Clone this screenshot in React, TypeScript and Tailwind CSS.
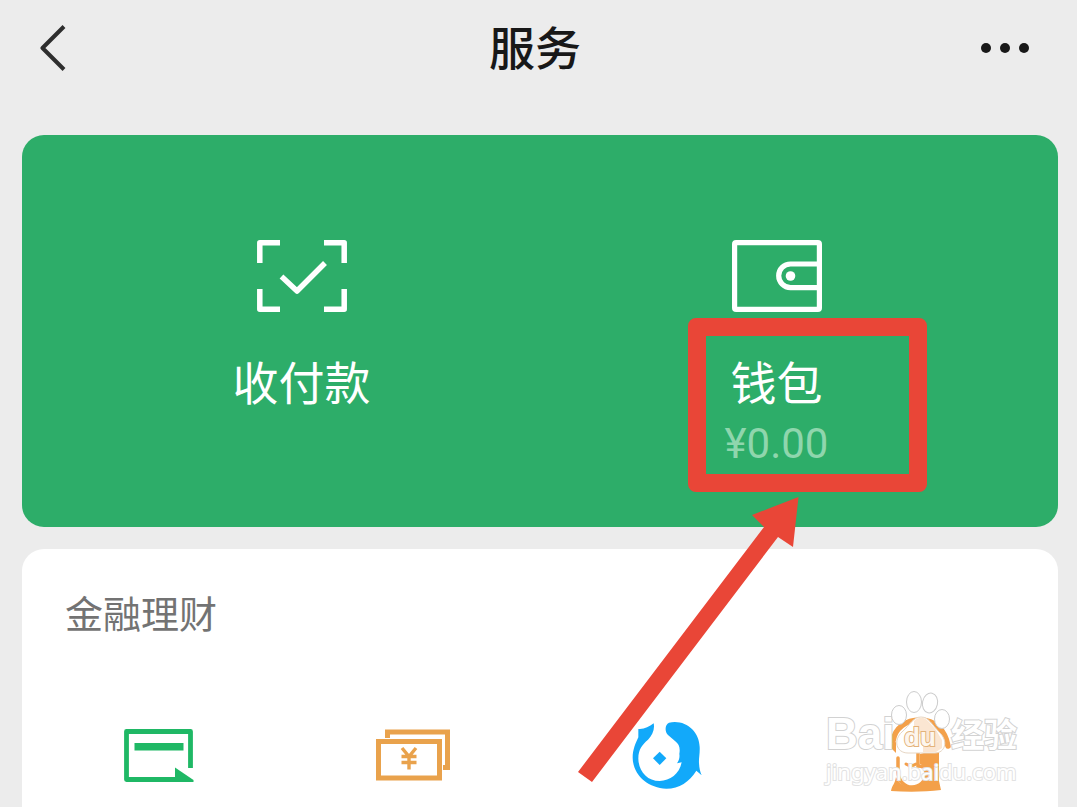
import type { ReactNode } from "react";

function ScanIcon() {
  return (
    <svg viewBox="0 0 90 72" className="h-[72px] w-[90px]" fill="none" stroke="currentColor" strokeWidth="5.5" strokeLinejoin="round">
      <path d="M23 2.8H2.8V23M67 2.8h20.2V23M2.8 49v20.2H23M67 69.2h20.2V49" />
      <path d="M24.500 36.500 40 51 68 23" />
    </svg>
  );
}

function WalletIcon() {
  return (
    <svg viewBox="0 0 90 72" className="h-[72px] w-[90px]" fill="none" stroke="currentColor" strokeWidth="5.2">
      <rect x="2.600" y="2.600" width="84.800" height="66.800" rx="1.500" />
      <path d="M86 24H58.500a11.800 11.800 0 0 0 0 23.600h27.500" />
      <circle cx="58.500" cy="36" r="4.800" fill="currentColor" stroke="none" />
    </svg>
  );
}

function CardIcon() {
  return (
    <svg viewBox="0 0 70 53" className="h-[53px] w-[70px]">
      <path d="M66.500 39V2.500H2.500v48H54" fill="none" stroke="#1fb865" strokeWidth="4.800" strokeLinejoin="round" />
      <path d="M10.500 14h49v7.500h-49z" fill="#1fb865" />
      <path d="M51 38.500 69.500 51v2H51z" fill="#1fb865" />
    </svg>
  );
}

function BanknotesIcon() {
  return (
    <svg viewBox="0 0 75 52" className="h-[52px] w-[75px]" fill="none" stroke="#e9a24c">
      <path d="M11.500 9V3H71.500v35.500H67" strokeWidth="5" />
      <rect x="2.500" y="12.500" width="61" height="36.500" strokeWidth="5" />
      <path d="m26 19 7 8.500 7-8.500M33 27v13.500M25.500 27.500h15M25.500 33.500h15" strokeWidth="3.400" />
    </svg>
  );
}

function FishIcon() {
  return (
    <svg viewBox="66 64 216 210" className="h-[70px] w-[72px]" fill="#12a9fa">
      <path d="M88 91C104 93 120 85 134 74C138 92 130 109 117 123C100 138 88 151 88 180C89 218 114 247 152 247C183 246 211 227 218 191L204 194C209 186 213 178 211 166C214 148 211 137 198 127L177 109C166 98 168 78 180 72C229 61 271 98 272 145C273 164 269 181 270 193C271 209 273 219 278 230L262 216C241 249 211 270 172 270C116 268 72 229 71 177C71 153 80 133 88 116Z" />
      <path d="m152 159 20 20-20 20-20-20z" />
    </svg>
  );
}

function HydrantIcon() {
  return (
    <svg viewBox="888 712 68 84" className="h-[84px] w-[68px]">
      <path d="M894 740C896 727 907 719 921 719C936 719 946 729 949 745" fill="none" stroke="#f3a04a" strokeWidth="5.500" strokeLinecap="round" />
      <path d="M891 743 897 741V752L891 746Z" fill="#f3a04a" />
      <path d="M899 757V771C899 780 906 786 913 786C921 786 927 780 927 772C927 767 924 765 919 765V750" fill="none" stroke="#f3a04a" strokeWidth="3.500" strokeLinecap="round" />
      <path d="M921 753 940 748V780L942 789C926 791 908 791 892 790C893 784 896 783 897 776C902 789 922 790 927 776C929 770 926 765 921 763Z" fill="#f3a04a" />
      <path d="M907 763c3 2 7 2 10 0" fill="none" stroke="#f3a04a" strokeWidth="3" strokeLinecap="round" />
    </svg>
  );
}

function PawIcon() {
  return (
    <svg viewBox="888 690 64 66" className="absolute bottom-[31px] left-[62px] h-[66px] w-[64px]" fill="#ffffff" stroke="#cccccc" strokeWidth="1">
      <path d="M921 717C929 717 932 725 939 732C949 741 945 753 935 753H908C896 753 893 740 902 732C910 725 913 717 921 717Z" stroke="#e6d6c4" />
      <path d="M914 721C919 716 925 717 929 722L936 730L942 740V748L936 752H923V734H914Z" fill="#fbe6d2" stroke="none" />
      <ellipse cx="899" cy="715" rx="7.500" ry="9.500" />
      <ellipse cx="914" cy="702" rx="7.500" ry="10.500" />
      <ellipse cx="930" cy="703" rx="7.500" ry="10" transform="rotate(12 930 703)" />
      <ellipse cx="942" cy="719" rx="7.500" ry="9.500" />
    </svg>
  );
}

function Watermark() {
  return (
    <div className="pointer-events-none absolute right-[58px] bottom-[20px] z-20 h-[98px] w-[193px] whitespace-nowrap text-white">
      <div className="absolute bottom-[31px] left-0 font-['Liberation_Sans',sans-serif] text-[44px] leading-[44px] font-bold [-webkit-text-stroke:2px_#d2d2d2] [paint-order:stroke]">
        Bai
      </div>
      <PawIcon />
      <div className="absolute bottom-[37px] left-[78px] font-['Liberation_Sans',sans-serif] text-[26px] leading-[26px] font-bold text-[#fdf6ee] [-webkit-text-stroke:2px_#e3b27a] [paint-order:stroke]">
        du
      </div>
      <div className="absolute right-[2px] bottom-[36px] font-['Noto_Sans_CJK_SC',sans-serif] text-[33px] leading-[36px] font-bold [-webkit-text-stroke:2px_#d2d2d2] [paint-order:stroke]">
        经验
      </div>
      <div className="absolute bottom-[4px] left-0 font-['Noto_Sans',sans-serif] text-[22px] leading-[24px] [-webkit-text-stroke:2px_#e2e2e2] [paint-order:stroke]">
        jingyan.baidu.com
      </div>
    </div>
  );
}

function Annotation() {
  return (
    <span className="pointer-events-none absolute top-0 left-1/2 z-10 w-0">
      <span className="absolute top-[78px] left-[-89px] h-[174px] w-[239px] rounded-lg border-[18px] border-[#e94637]" />
      <svg viewBox="577 496 224 288" className="absolute top-[256px] left-[-200px] h-[288px] w-[224px] max-w-none">
        <path d="M578 772 764 527 752 515 798.500 497 793 547 778 537 592 782Z" fill="#e94637" />
      </svg>
    </span>
  );
}

function PayButton({ icon, label, amount, children }: { icon: ReactNode; label: string; amount?: string; children?: ReactNode }) {
  return (
    <button type="button" className="relative flex flex-col items-center text-white">
      {icon}
      <span className="mt-[36px] text-[46px] leading-[64px]">{label}</span>
      {amount && <span className="mt-1 font-['Roboto',sans-serif] text-[42px] leading-[56px] text-[#8fd6ad]">{amount}</span>}
      {children}
    </button>
  );
}

const services = [
  { name: "信用卡还款", icon: <CardIcon /> },
  { name: "微粒贷借钱", icon: <BanknotesIcon /> },
  { name: "理财通", icon: <FishIcon /> },
  { name: "保险服务", icon: <HydrantIcon /> },
];

export default function App() {
  return (
    <div className="relative flex min-h-screen flex-col overflow-hidden bg-[#ececec] pr-[19px] pl-[22px] font-['Noto_Sans_CJK_SC',sans-serif]">
      <header className="flex h-24 items-center justify-between pr-[28px] pl-[18px]">
        <button type="button" aria-label="返回" className="w-[50px]">
          <svg viewBox="0 0 26 46" className="h-[46px] w-[26px]" fill="none" stroke="#2e2e2e" strokeWidth="4" strokeLinejoin="round">
            <path d="M24 1.500 2.500 23 24 44.500" />
          </svg>
        </button>
        <h1 className="pb-1.5 text-[46px] leading-[64px] font-medium text-[#181818]">服务</h1>
        <button type="button" aria-label="更多" className="w-[50px]">
          <svg viewBox="0 0 50 12" className="h-[12px] w-[50px]" fill="#181818">
            <circle cx="6" cy="6" r="5" />
            <circle cx="25" cy="6" r="5" />
            <circle cx="44" cy="6" r="5" />
          </svg>
        </button>
      </header>

      <main className="flex grow flex-col gap-[22px] pt-[39px]">
        <section className="grid grid-cols-2 items-start rounded-[22px] bg-[#2dad69] pt-[105px] pr-[44px] pb-[55px] pl-[42px]">
          <PayButton icon={<ScanIcon />} label="收付款" />
          <PayButton icon={<WalletIcon />} label="钱包" amount="¥0.00">
            <Annotation />
          </PayButton>
        </section>

        <section className="grow rounded-t-[22px] bg-white pt-[35px]">
          <h2 className="px-[43px] text-[38px] leading-[56px] text-[#737373]">金融理财</h2>
          <div className="mt-[73px] grid grid-cols-4 px-[10px]">
            {services.map((service) => (
              <button key={service.name} type="button" aria-label={service.name} className="flex h-[84px] items-center justify-center">
                {service.icon}
              </button>
            ))}
          </div>
        </section>
      </main>

      <Watermark />
    </div>
  );
}
